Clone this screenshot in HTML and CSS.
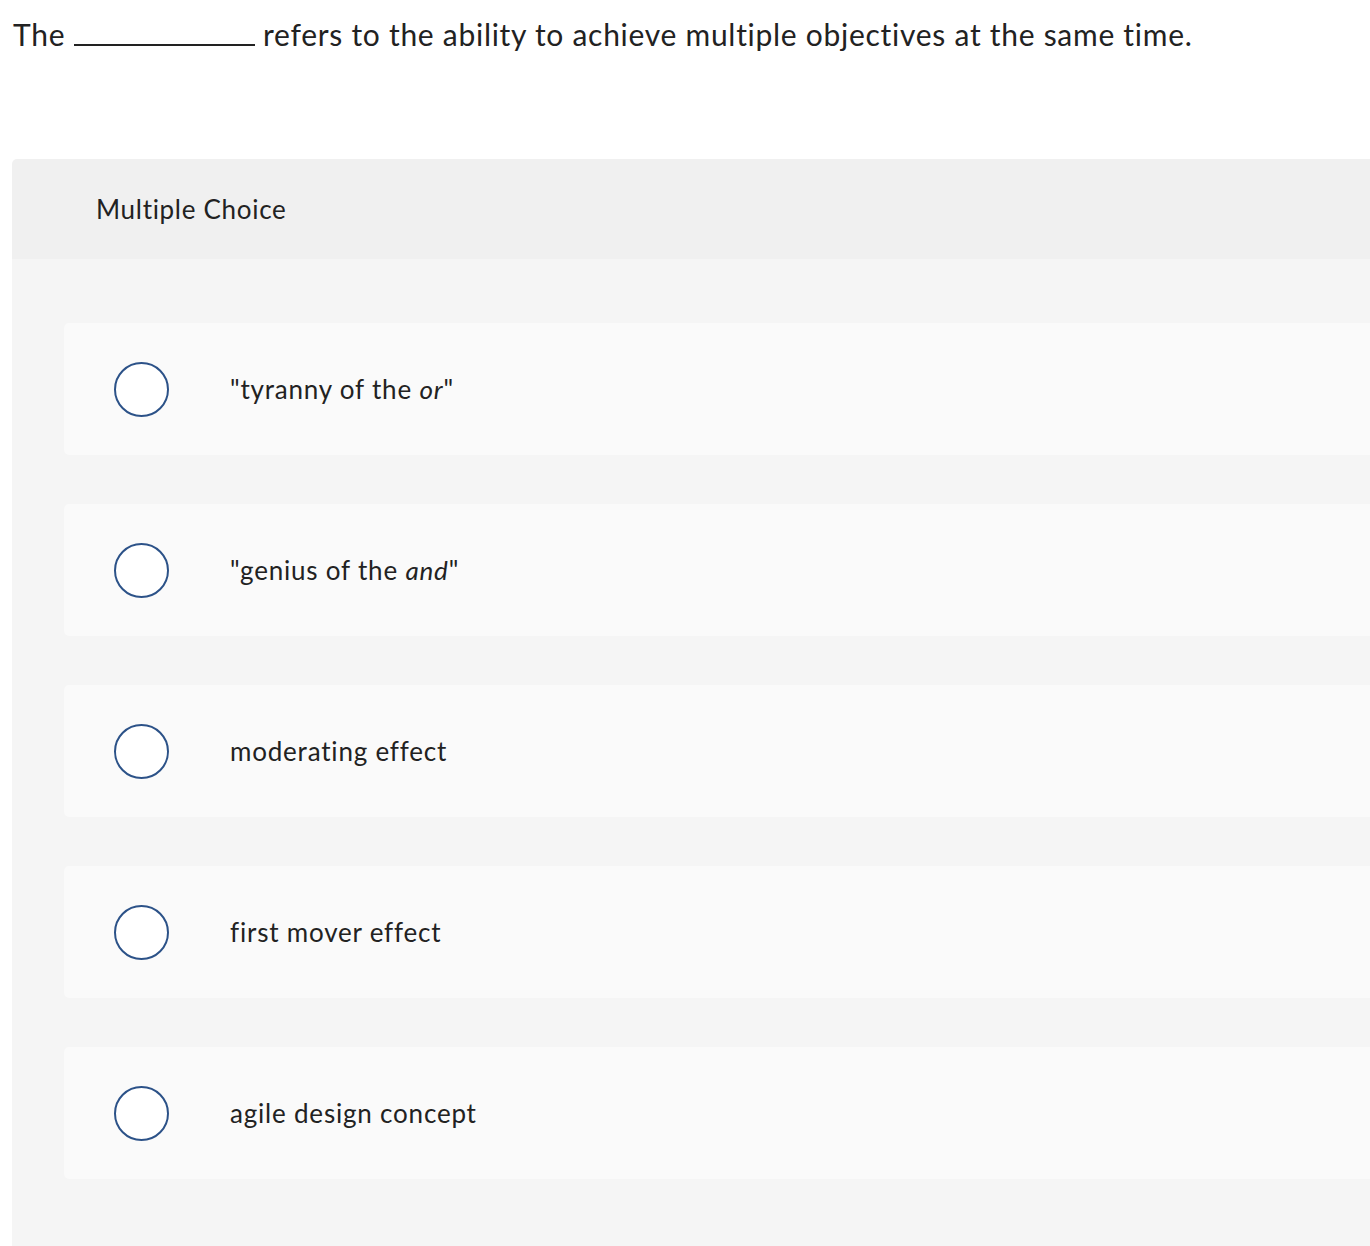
FILE: index.html
```html
<!DOCTYPE html>
<html>
<head>
<meta charset="utf-8">
<link rel="stylesheet" href="styles.css">
</head>
<body>
<div class="question">The <span class="blank"></span> refers to the ability to achieve multiple objectives at the same time.</div>
<div class="panel">
  <div class="panel-head">Multiple Choice</div>
  <div class="panel-body">
    <div class="option"><span class="radio"></span><span class="label">"tyranny of the <em>or</em>"</span></div>
    <div class="option"><span class="radio"></span><span class="label">"genius of the <em>and</em>"</span></div>
    <div class="option"><span class="radio"></span><span class="label">moderating effect</span></div>
    <div class="option"><span class="radio"></span><span class="label">first mover effect</span></div>
    <div class="option"><span class="radio"></span><span class="label">agile design concept</span></div>
  </div>
</div>
</body>
</html>
```
FILE: styles.css
```css
html { overflow: hidden; }
body {
  margin: 0;
  background: #fff;
  font-family: Lato, "Open Sans", sans-serif;
  font-variant-ligatures: none;
  color: #222;
}
.question {
  padding: 14px 0 0 13px;
  font-size: 30px;
  letter-spacing: 0.72px;
  line-height: 40px;
  height: 145px;
}
.blank {
  display: inline-block;
  width: 181px;
  border-bottom: 2px solid #222;
  vertical-align: baseline;
}
.panel {
  margin-left: 12px;
  width: 1400px;
}
.panel-head {
  background: #f0f0f0;
  border-top-left-radius: 5px;
  height: 100px;
  box-sizing: border-box;
  padding-left: 84px;
  display: flex;
  align-items: center;
  font-size: 26px;
  letter-spacing: 0.7px;
}
.panel-body {
  background: #f5f5f5;
  padding: 64px 0 80px 52px;
  display: flex;
  flex-direction: column;
  gap: 49px;
}
.option {
  background: #fafafa;
  border-radius: 5px 0 0 5px;
  height: 132px;
  display: flex;
  align-items: center;
  padding-left: 50px;
}
.radio {
  width: 51px;
  height: 51px;
  border: 2px solid #2c5288;
  border-radius: 50%;
  background: #fff;
  flex: none;
}
.label {
  margin-left: 61px;
  font-size: 26px;
  letter-spacing: 0.8px;
}
.label em { font-style: italic; }
```
